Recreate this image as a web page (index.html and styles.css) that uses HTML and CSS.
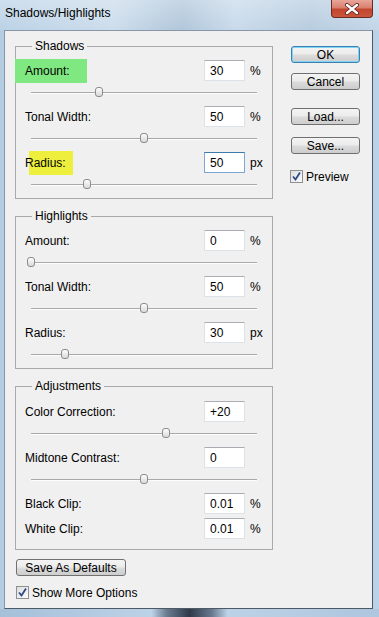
FILE: index.html
```html
<!DOCTYPE html>
<html lang="en">
<head>
    <meta charset="UTF-8">
    <meta name="viewport" content="width=device-width, initial-scale=1.0">
    <title>Shadows/Highlights</title>
    <link rel="stylesheet" href="styles.css">
</head>
<body>
<div class="window">
    <div class="titlebar">
        <span class="title">Shadows/Highlights</span>
        <span class="close">
            <svg width="16" height="12" viewBox="0 0 16 12">
                <path d="M3 2 L13 10 M13 2 L3 10" stroke="#5a2018" stroke-width="4" stroke-linecap="round"/>
                <path d="M3 2 L13 10 M13 2 L3 10" stroke="#fff" stroke-width="2.4" stroke-linecap="round"/>
            </svg>
        </span>
    </div>

    <div class="client">
        <div class="main">
            <fieldset class="group">
                <legend>Shadows</legend>
                <div class="row">
                    <label class="hl-green">Amount:</label>
                    <input class="field" type="text" value="30">
                    <span class="unit">%</span>
                </div>
                <div class="slider"><span class="thumb" style="margin-left:64px"></span></div>
                <div class="row">
                    <label>Tonal Width:</label>
                    <input class="field" type="text" value="50">
                    <span class="unit">%</span>
                </div>
                <div class="slider"><span class="thumb" style="margin-left:109px"></span></div>
                <div class="row">
                    <label class="hl-yellow">Radius:</label>
                    <input class="field focused" type="text" value="50">
                    <span class="unit">px</span>
                </div>
                <div class="slider"><span class="thumb" style="margin-left:52px"></span></div>
            </fieldset>

            <fieldset class="group">
                <legend>Highlights</legend>
                <div class="row">
                    <label>Amount:</label>
                    <input class="field" type="text" value="0">
                    <span class="unit">%</span>
                </div>
                <div class="slider"><span class="thumb" style="margin-left:-4px"></span></div>
                <div class="row">
                    <label>Tonal Width:</label>
                    <input class="field" type="text" value="50">
                    <span class="unit">%</span>
                </div>
                <div class="slider"><span class="thumb" style="margin-left:109px"></span></div>
                <div class="row">
                    <label>Radius:</label>
                    <input class="field" type="text" value="30">
                    <span class="unit">px</span>
                </div>
                <div class="slider"><span class="thumb" style="margin-left:30px"></span></div>
            </fieldset>

            <fieldset class="group adjust">
                <legend>Adjustments</legend>
                <div class="row">
                    <label>Color Correction:</label>
                    <input class="field" type="text" value="+20">
                    <span class="unit"></span>
                </div>
                <div class="slider"><span class="thumb" style="margin-left:131px"></span></div>
                <div class="row">
                    <label>Midtone Contrast:</label>
                    <input class="field" type="text" value="0">
                    <span class="unit"></span>
                </div>
                <div class="slider"><span class="thumb" style="margin-left:109px"></span></div>
                <div class="row">
                    <label>Black Clip:</label>
                    <input class="field" type="text" value="0.01">
                    <span class="unit">%</span>
                </div>
                <div class="row clip">
                    <label>White Clip:</label>
                    <input class="field" type="text" value="0.01">
                    <span class="unit">%</span>
                </div>
            </fieldset>

            <button class="btn defaults">Save As Defaults</button>
            <label class="check more">
                <span class="box">
                    <svg width="11" height="11" viewBox="0 0 11 11"><path d="M2 5.5 L4.5 8.5 L9 1.5" fill="none" stroke="#2b4a8c" stroke-width="1.8"/></svg>
                </span>
                Show More Options
            </label>
        </div>

        <div class="side">
            <button class="btn default">OK</button>
            <button class="btn cancel">Cancel</button>
            <button class="btn load">Load...</button>
            <button class="btn save">Save...</button>
            <label class="check preview">
                <span class="box">
                    <svg width="11" height="11" viewBox="0 0 11 11"><path d="M2 5.5 L4.5 8.5 L9 1.5" fill="none" stroke="#2b4a8c" stroke-width="1.8"/></svg>
                </span>
                Preview
            </label>
        </div>
    </div>
    <div class="frame-bottom"></div>
</div>
</body>
</html>
```

FILE: styles.css
```css
body{
    margin: 0;
    font-family: "Liberation Sans", Arial, sans-serif;
    font-size: 12px;
    color: #000;
}
.window{
    width: 379px;
    height: 617px;
    display: flex;
    flex-direction: column;
    background: linear-gradient(to right, #b4cde3 0%, #c6d9ea 30%, #a8c0d6 48%, #c2d6e8 62%, #b0c7dc 82%, #bcd2e6 100%);
}
.titlebar{
    height: 30px;
    display: flex;
    align-items: flex-start;
    background: linear-gradient(to bottom, rgba(255,255,255,0.35), rgba(255,255,255,0.1));
}
.title{
    flex: 1;
    padding: 6px 0 0 5px;
    line-height: 14px;
}
.close{
    width: 42px;
    height: 18px;
    margin-right: 6px;
    box-sizing: border-box;
    border: 1px solid #6b2a22;
    border-top: none;
    border-radius: 0 0 4px 4px;
    background: linear-gradient(to bottom, #e9a799 0%, #d8806f 45%, #c4452f 55%, #c9563c 100%);
    display: flex;
    align-items: center;
    justify-content: center;
}
.client{
    margin-left: 4px;
    width: 369px;
    height: 579px;
    box-sizing: border-box;
    border: 1px solid #8795a6;
    border-right-color: #4e5966;
    border-bottom-color: #4e5966;
    background: #f0f0f0;
    display: flex;
    padding: 8px 0 0 10px;
}
.frame-bottom{
    flex: 1;
    background: linear-gradient(to right, #a6c0da 0%, #bcd2e6 40%, #6a7b90 44%, #2f3a4a 50%, #6a7b90 56%, #bcd2e6 60%, #aec6de 100%);
}
.main{
    width: 258px;
    display: flex;
    flex-direction: column;
}
.group{
    margin: 0;
    padding: 7px 1px 0 9px;
    border: 1px solid #a9a9a9;
    min-width: 0;
}
.group + .group{
    margin-top: 10px;
}
.group legend{
    margin-left: 7px;
    padding: 0 3px;
    line-height: 14px;
}
.adjust{
    padding-top: 8px;
    padding-bottom: 10px;
}
.row{
    display: flex;
    align-items: center;
    height: 21px;
}
.row.clip{
    margin-top: 4px;
}
.row label{
    margin-right: auto;
}
.hl-green{
    background: #80e880;
    margin-left: -10px;
    padding-left: 10px;
    width: 62px;
    height: 24px;
    line-height: 24px;
}
.hl-yellow{
    background: linear-gradient(#edef3c, #edef3c) 4px 0 / 44px 24px no-repeat;
    width: 48px;
    height: 24px;
    line-height: 24px;
}
.field{
    width: 41px;
    height: 21px;
    box-sizing: border-box;
    margin: 0;
    padding: 0 0 0 5px;
    border: 1px solid #dde2e8;
    border-top-color: #abadb3;
    background: #fff;
    font-family: inherit;
    font-size: 12px;
    outline: none;
}
.field.focused{
    border-color: #7aa7d6;
    border-top-color: #3d7bad;
}
.unit{
    width: 21px;
    margin-left: 5px;
}
.slider{
    height: 25px;
    width: 226px;
    margin-left: 6px;
    display: flex;
    align-items: flex-start;
    background: linear-gradient(to bottom, transparent 11px, #a8a8a8 11px, #a8a8a8 12px, #fdfdfd 12px, #fdfdfd 13px, transparent 13px);
}
.thumb{
    width: 8px;
    height: 10px;
    margin-top: 6px;
    box-sizing: border-box;
    border: 1px solid #8c8c8c;
    border-radius: 3px 3px 3px 3px;
    background: linear-gradient(to bottom, #fdfdfd, #d9d9d9);
}
.btn{
    height: 17px;
    box-sizing: border-box;
    padding: 0;
    border: 1px solid #707070;
    border-radius: 3px;
    background: linear-gradient(to bottom, #f4f4f4 0%, #ebebeb 48%, #dcdcdc 52%, #cdcdcd 100%);
    font-family: inherit;
    font-size: 12px;
    line-height: 14px;
    color: #000;
}
.defaults{
    width: 110px;
    margin: 9px 0 0 1px;
}
.check{
    display: flex;
    align-items: center;
    gap: 3px;
    height: 15px;
}
.box{
    width: 13px;
    height: 13px;
    box-sizing: border-box;
    border: 1px solid #8e8f8f;
    background: linear-gradient(135deg, #dedede, #fbfbfb);
    display: flex;
    align-items: center;
    justify-content: center;
}
.more{
    margin: 9px 0 0 1px;
}
.side{
    width: 69px;
    margin: 7px 0 0 18px;
    display: flex;
    flex-direction: column;
}
.default{
    border-color: #3c7fb1;
    box-shadow: inset 0 0 0 1px #7fd6f4;
}
.cancel{
    margin-top: 10px;
}
.load{
    margin-top: 18px;
}
.save{
    margin-top: 12px;
}
.preview{
    margin: 15px 0 0 -1px;
}
```
